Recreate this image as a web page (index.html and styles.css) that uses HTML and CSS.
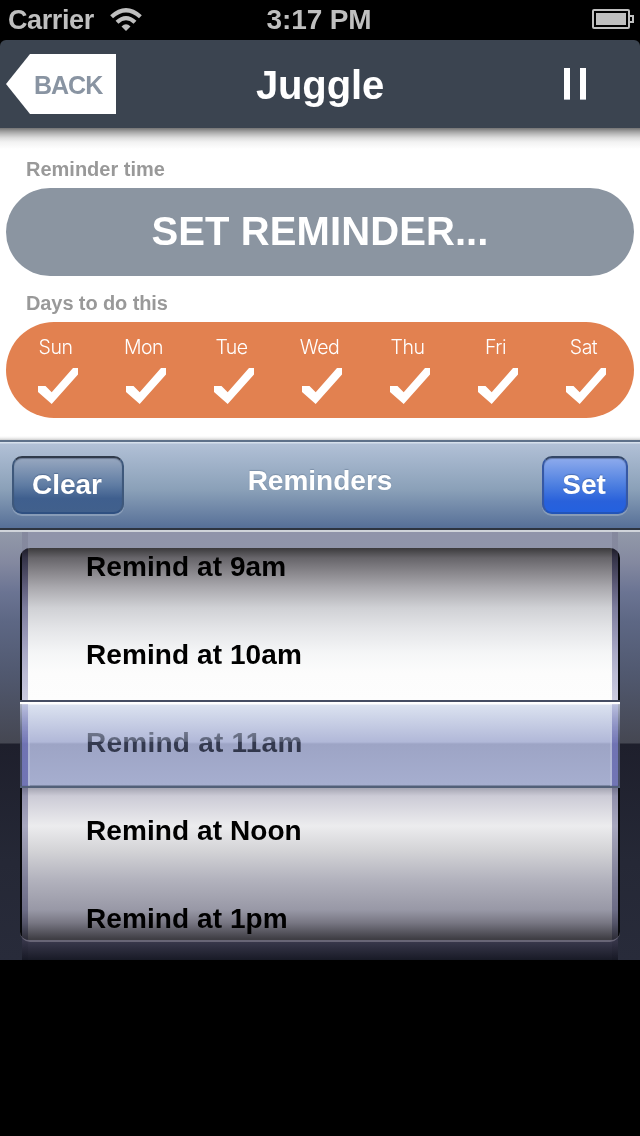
FILE: index.html
```html
<!DOCTYPE html>
<html lang="en">
<head>
<meta charset="utf-8">
<title>Juggle</title>
<link rel="stylesheet" href="styles.css">
</head>
<body>
<div class="statusbar">
  <div class="carrier"><span class="t-carrier">Carrier</span>
    <svg class="wifi" width="32" height="24" viewBox="0 0 32 24"><g fill="none" stroke="#bfbfbf" stroke-width="4.2"><path d="M1.6 8.8Q16 -4.3 30.4 8.8"/><path d="M7 14.3Q16 6 25 14.3"/></g><path fill="#bfbfbf" d="M11.5 18.4Q16 14 20.5 18.4L16 23Z"/></svg>
  </div>
  <span class="clock">3:17 PM</span>
  <svg class="battery" width="42" height="20" viewBox="0 0 42 20"><rect x="1" y="1" width="36" height="18" rx="1" fill="none" stroke="#bfbfbf" stroke-width="2"/><rect x="4" y="4" width="30" height="12" fill="#bfbfbf"/><path d="M38 7h3v6h-3" fill="none" stroke="#bfbfbf" stroke-width="2"/></svg>
</div>
<header class="navbar">
  <div class="back"><svg class="back-shape" width="110" height="60" viewBox="0 0 110 60"><path d="M0 30L24 0H110V60H24Z" fill="#fff"/></svg><span class="back-label">BACK</span></div>
  <h1 class="title">Juggle</h1>
  <div class="pause"><i></i><i></i></div>
</header>
<main class="content">
  <p class="label"><span class="t-time">Reminder time</span></p>
  <div class="reminder"><span>SET REMINDER...</span></div>
  <p class="label label-days"><span class="t-days">Days to do this</span></p>
  <div class="days">
    <div class="day"><span>Sun</span><svg class="check" viewBox="0 0 40 36"><path d="M0 18H7.5L13.7 24.3L35 0H40V6.5L13.7 36L0 23.9Z"/></svg></div>
    <div class="day"><span>Mon</span><svg class="check" viewBox="0 0 40 36"><path d="M0 18H7.5L13.7 24.3L35 0H40V6.5L13.7 36L0 23.9Z"/></svg></div>
    <div class="day"><span>Tue</span><svg class="check" viewBox="0 0 40 36"><path d="M0 18H7.5L13.7 24.3L35 0H40V6.5L13.7 36L0 23.9Z"/></svg></div>
    <div class="day"><span>Wed</span><svg class="check" viewBox="0 0 40 36"><path d="M0 18H7.5L13.7 24.3L35 0H40V6.5L13.7 36L0 23.9Z"/></svg></div>
    <div class="day"><span>Thu</span><svg class="check" viewBox="0 0 40 36"><path d="M0 18H7.5L13.7 24.3L35 0H40V6.5L13.7 36L0 23.9Z"/></svg></div>
    <div class="day"><span>Fri</span><svg class="check" viewBox="0 0 40 36"><path d="M0 18H7.5L13.7 24.3L35 0H40V6.5L13.7 36L0 23.9Z"/></svg></div>
    <div class="day"><span>Sat</span><svg class="check" viewBox="0 0 40 36"><path d="M0 18H7.5L13.7 24.3L35 0H40V6.5L13.7 36L0 23.9Z"/></svg></div>
  </div>
</main>
<section class="toolbar">
  <div class="button clear"><span>Clear</span></div>
  <h2 class="toolbar-title">Reminders</h2>
  <div class="button set"><span>Set</span></div>
</section>
<section class="picker">
  <div class="drum">
    <div class="wheel">
      <div class="pane upper"><div class="row">Remind at 9am</div><div class="row">Remind at 10am</div></div>
      <div class="pane selected"><div class="row"><span>Remind at 11am</span></div></div>
      <div class="pane lower"><div class="row">Remind at Noon</div><div class="row">Remind at 1pm</div></div>
    </div>
  </div>
</section>
</body>
</html>
```
FILE: styles.css
```css
* { box-sizing: border-box; }
body { margin: 0; width: 640px; height: 1136px; background: #000; overflow: hidden; font-family: "Liberation Sans", Arial, sans-serif; font-weight: 700; }
h1, h2, p { margin: 0; }
span { white-space: nowrap; }

.statusbar { height: 40px; display: grid; grid-template-columns: 1fr auto 1fr; align-items: center; padding: 0 6px 2px 8px; color: #bfbfbf; font-size: 27px; }
.carrier { display: flex; gap: 16px; align-items: center; }
.t-carrier { letter-spacing: -.4px; padding-top: 2px; }
.wifi { margin-top: 2px; }
.clock { font-size: 28px; letter-spacing: -.15px; padding-top: 2px; margin-left: -4px; }
.battery { justify-self: end; }

.navbar { height: 88px; background: #3b4450; border-radius: 6px 6px 0 0; display: grid; grid-template-columns: 110px 1fr 110px; align-items: center; padding: 0 6px; }
.back { display: grid; align-items: center; }
.back-shape, .back-label { grid-area: 1 / 1; }
.back-label { padding: 3px 0 0 28px; font-size: 25px; letter-spacing: -1px; color: #8994a2; }
.title { text-align: center; color: #fff; font-size: 40px; line-height: 46px; letter-spacing: -.15px; padding-top: 1px; }
.pause { display: flex; gap: 10px; padding-left: 40px; }
.pause i { width: 6px; height: 32px; background: #fff; border-bottom: 1px solid #b4bac2; }

.content { height: 312px; padding: 29px 6px 0; background: linear-gradient(#747474, #8e8e8e 2px, #a6a6a6 4px, #c4c4c4 7px, #dedede 10px, #f2f2f2 14px, #fff 21px, #fff 308px, #f0f0f0 310px, #cecece 312px); }
.label { height: 31px; padding-left: 20px; font-size: 20px; line-height: 24px; color: #999; }
.t-days { letter-spacing: -.1px; }
.reminder { height: 88px; padding-bottom: 2px; border-radius: 44px; background: #8b95a1; color: #fff; font-size: 40px; letter-spacing: .1px; display: flex; align-items: center; justify-content: center; }
.label-days { height: 46px; padding-top: 15px; }
.days { height: 96px; border-radius: 48px; background: #e28150; padding: 12px 6px 0; display: grid; grid-template-columns: repeat(7, 88px); }
.day { display: flex; flex-direction: column; align-items: center; color: #fff; font-family: Inter, Roboto, sans-serif; font-weight: 300; font-size: 19.5px; line-height: 26px; letter-spacing: -.5px; }
.day span { margin-right: 1px; }
.check { width: 40px; height: 36px; margin: 8px 0 0 4px; fill: #fff; }

.toolbar { height: 92px; border-top: 2px solid #5d7089; border-bottom: 2px solid #d0d4da; background: linear-gradient(#d5dfeb 0 1px, #b1c0d6 2px, #8aa0b8 48px, #566f97 86px, #2d3440 86px); display: grid; grid-template-columns: 112px 1fr 86px; padding: 14px 12px 0; }
.toolbar-title { color: #fff; font-size: 28px; line-height: 32px; text-align: center; padding: 9px 0 0; margin-left: -26px; text-shadow: 0 -1px 1px #52678066; }
.button { height: 58px; border-radius: 10px; border: 2px solid; color: #fff; font-size: 28px; display: flex; align-items: center; justify-content: center; box-shadow: 0 2px 0 #a4b4cb88, inset 0 1px 1px #27354b66; text-shadow: 0 -1px 1px #203c6866; }
.button span { margin-right: 2px; }
.clear { border-color: #303b4b #3e587b #2f5081; background: linear-gradient(#98a8c0, #5f7ca3 50%, #3f5f8e 75%, #41608c); }
.set { border-color: #334767 #3658a4 #2254b8; background: linear-gradient(#8eabed, #4d7fe0 50%, #2961db 80%, #2461df); }

.picker { height: 428px; padding: 0 22px; background: linear-gradient(#9299a9, #8489a0 30px, #6b7493 60px, #5d6784 90px, #515970 140px, #454752 211px, #1e1f2c 212px, #252836 330px, #282b3a); }
.drum { height: 428px; padding-top: 16px; background: linear-gradient(90deg, #00001014 6px, transparent 6px 590px, #00001014 590px), linear-gradient(#9094aa, #9095aa 18px, #686d7e 130px, #1f202d 240px, #24273a 400px, #3a394d 409px, #181a26); }
.wheel { width: 600px; height: 394px; margin-left: -2px; border-radius: 10px; overflow: hidden; border-bottom: 2px solid #686576; display: flex; flex-direction: column; }
.pane { position: relative; display: flex; flex-direction: column; padding: 0 8px; overflow: hidden; }
.pane::before { content: ""; position: absolute; inset: 0; }
.row { position: relative; flex: none; height: 88px; line-height: 88px; padding-left: 58px; font-size: 28px; letter-spacing: .08px; color: #000; }
.upper { height: 152px; justify-content: flex-end; padding-bottom: 1px; background: linear-gradient(#3b3a3c, #67656a 10px, #88868b 24px, #a9a8ad 39px, #d0d1d5 60px, #e3e4e7 80px, #f5f6f7 105px, #fcfcfc 125px, #fdfdfd); }
.upper::before, .lower::before { background: linear-gradient(90deg, #07080b 2px, transparent 2px 598px, #07080b 598px); }
.upper::after, .lower::after { content: ""; position: absolute; inset: 0 2px; border: solid #9a99bd; border-width: 0 6px; mix-blend-mode: multiply; }
.upper::after { border-image: linear-gradient(#7d7ca8, #a5a3c4 55%, #cdcde1) 0 6; }
.lower::after { border-color: #b5b5cd; }
.selected { height: 88px; border-top: 2px solid #454d63; background: linear-gradient(#fff 0 2px, #dbe2f0 3px, #b1b8d8 40px, #9da4c5 42px, #a6aecf 83px, #526078 84px); }
.selected::before { background: linear-gradient(90deg, #4c536a 2px, transparent 2px 598px, #4c536a 598px), linear-gradient(90deg, #6467aecc 8px, #c5cce866 8px 10px, transparent 10px 590px, #c5cce866 590px 592px, #6467aecc 592px); bottom: 2px; top: 2px; -webkit-mask-image: linear-gradient(#0005, #000 40px); mask-image: linear-gradient(#0005, #000 40px); }
.selected .row { margin-top: -3px; letter-spacing: .24px; }
.selected .row span { background: linear-gradient(#6e758a 20%, #5c6379 46%, #343a50 50%, #303548); background-clip: text; -webkit-background-clip: text; color: transparent; }
.lower { height: 152px; background: linear-gradient(#a5a5b2, #cccbd6 8px, #ececee 38px, #d4d4d7 62px, #b2b2bd 92px, #9898a6 122px, #777682 135px, #3f3e44 151px); }
.lower .row:first-child { margin-top: -1px; }
```
